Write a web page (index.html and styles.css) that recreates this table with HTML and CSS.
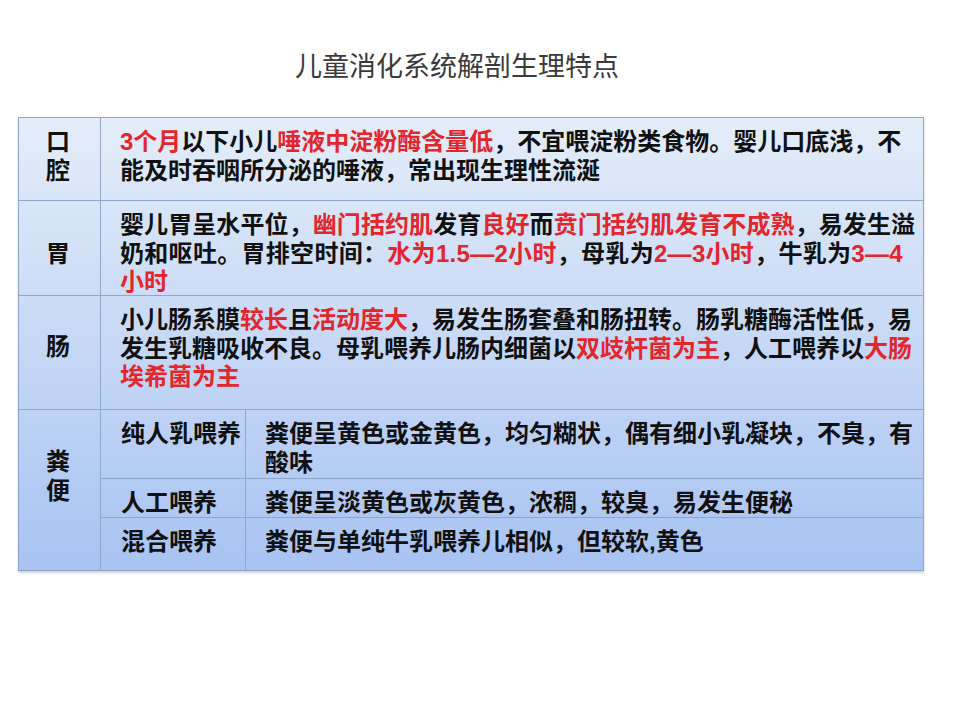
FILE: index.html
```html
<!DOCTYPE html>
<html lang="zh-CN">
<head>
<meta charset="utf-8">
<title>儿童消化系统解剖生理特点</title>
<link rel="stylesheet" href="styles.css">
</head>
<body>
<div class="page">
  <h1 class="title">儿童消化系统解剖生理特点</h1>
  <div class="table">
    <div class="row r1">
      <div class="label l1">口<br>腔</div>
      <div class="cell">
        <span class="ln"><span class="r">3个月</span>以下小儿<span class="r">唾液中淀粉酶含量低</span>，不宜喂淀粉类食物。婴儿口底浅，不</span>
        <span class="ln">能及时吞咽所分泌的唾液，常出现生理性流涎</span>
      </div>
    </div>
    <div class="row r2">
      <div class="label l2">胃</div>
      <div class="cell">
        <span class="ln j">婴儿胃呈水平位，<span class="r">幽门括约肌</span>发育<span class="r">良好</span>而<span class="r">贲门括约肌发育不成熟</span>，易发生溢</span>
        <span class="ln wide">奶和呕吐。胃排空时间：<span class="r">水为1.5—2小时</span>，母乳为<span class="r">2—3小时</span>，牛乳为<span class="r">3—4</span></span>
        <span class="ln"><span class="r">小时</span></span>
      </div>
    </div>
    <div class="row r3">
      <div class="label l3">肠</div>
      <div class="cell">
        <span class="ln">小儿肠系膜<span class="r">较长</span>且<span class="r">活动度大</span>，易发生肠套叠和肠扭转。肠乳糖酶活性低，易</span>
        <span class="ln">发生乳糖吸收不良。母乳喂养儿肠内细菌以<span class="r">双歧杆菌为主</span>，人工喂养以<span class="r">大肠</span></span>
        <span class="ln"><span class="r">埃希菌为主</span></span>
      </div>
    </div>
    <div class="row r4">
      <div class="label l4">粪<br>便</div>
      <div class="sub">
        <div class="subrow s1">
          <div class="sublabel">纯人乳喂养</div>
          <div class="subtext">
            <span class="ln">粪便呈黄色或金黄色，均匀糊状，偶有细小乳凝块，不臭，有</span>
            <span class="ln">酸味</span>
          </div>
        </div>
        <div class="subrow s2">
          <div class="sublabel">人工喂养</div>
          <div class="subtext"><span class="ln">粪便呈淡黄色或灰黄色，浓稠，较臭，易发生便秘</span></div>
        </div>
        <div class="subrow s3">
          <div class="sublabel">混合喂养</div>
          <div class="subtext"><span class="ln">粪便与单纯牛乳喂养儿相似，但较软,黄色</span></div>
        </div>
      </div>
    </div>
  </div>
</div>
</body>
</html>
```
FILE: styles.css
```css
html, body {
  margin: 0;
  padding: 0;
  background: #ffffff;
}

.page {
  width: 960px;
  height: 720px;
  padding: 50px 0 0 18px;
  box-sizing: border-box;
  font-family: "Liberation Sans", "Noto Sans CJK SC", sans-serif;
}

.title {
  margin: 0;
  width: 906px;
  padding-right: 28px;
  box-sizing: border-box;
  text-align: center;
  font-size: 27px;
  line-height: 30px;
  font-weight: normal;
  color: #3a3a3a;
  font-family: "Noto Sans CJK SC", sans-serif;
}

.table {
  margin-top: 37px;
  width: 906px;
  box-sizing: border-box;
  border: 1px solid #8ea6c7;
  background: linear-gradient(to bottom, #e4edf9 0%, #c6d8f5 50%, #a8c3f2 100%);
  box-shadow: 0 2px 2px rgba(60, 80, 110, 0.25);
  font-size: 24px;
  line-height: 28.5px;
  font-weight: bold;
  color: #111111;
}

.row {
  display: flex;
  box-sizing: border-box;
  border-bottom: 1px solid #8fa8ca;
}

.row.r4 {
  border-bottom: none;
}

.r1 { height: 83px; }
.r2 { height: 95px; }
.r3 { height: 114px; }
.r4 { height: 160px; }

.label {
  flex: 0 0 82px;
  box-sizing: border-box;
  border-right: 1px solid #8fa8ca;
  text-align: center;
  padding-right: 3px;
}

.l1 { padding-top: 10px; }
.l2 { padding-top: 39px; }
.l3 { padding-top: 37px; }
.l4 { padding-top: 38px; }

.cell {
  flex: 1 1 auto;
  padding: 10px 8px 0 19px;
  box-sizing: border-box;
}

.ln {
  display: block;
  white-space: nowrap;
}

.ln.j {
  white-space: normal;
  text-align: justify;
  text-align-last: justify;
}

.ln.wide {
  letter-spacing: 0.3px;
}

.r {
  color: #e3262b;
}

.sub {
  flex: 1 1 auto;
  display: flex;
  flex-direction: column;
}

.subrow {
  display: flex;
  box-sizing: border-box;
  border-bottom: 1px solid #8fa8ca;
}

.subrow.s3 {
  border-bottom: none;
}

.s1 { height: 69px; }
.s2 { height: 39px; }
.s3 { height: 52px; }

.sublabel {
  flex: 0 0 145px;
  box-sizing: border-box;
  border-right: 1px solid #8fa8ca;
  padding: 10px 0 0 20px;
}

.subtext {
  flex: 1 1 auto;
  padding: 10px 8px 0 19px;
}
```
